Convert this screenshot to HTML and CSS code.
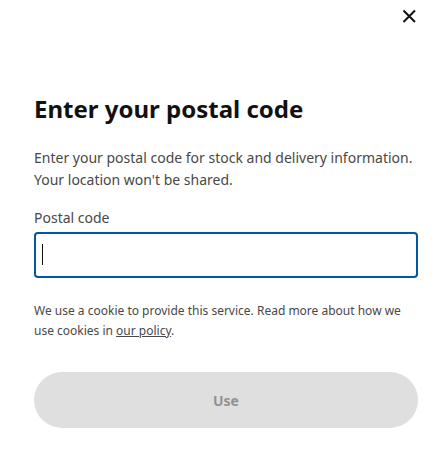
FILE: index.html
```html
<!DOCTYPE html>
<html lang="en">
<head>
<meta charset="utf-8">
<link rel="stylesheet" href="styles.css">
</head>
<body>
<div class="sheet">
  <div class="topbar">
    <button class="close" aria-label="Close">
      <svg width="24" height="24" viewBox="0 0 24 24"><path d="M6.5 6.5l11.5 11.5M18 6.5l-11.5 11.5" stroke="#111" stroke-width="2" fill="none"/></svg>
    </button>
  </div>
  <div class="content">
    <h1 class="title">Enter your postal code</h1>
    <p class="desc">Enter your postal code for stock and delivery information. Your location won't be shared.</p>
    <label class="label" for="pc">Postal code</label>
    <div class="field"><span class="caret"></span></div>
    <p class="note">We use a cookie to provide this service. Read more about how we use cookies in <a href="#" class="link">our policy</a>.</p>
    <button class="use">Use</button>
  </div>
</div>
</body>
</html>
```
FILE: styles.css
```css
* { box-sizing: border-box; }
html, body { margin: 0; padding: 0; background: #fff; }
body { font-family: "Noto Sans", "Open Sans", sans-serif; color: #111; }
.sheet { width: 445px; height: 461px; }
.topbar { display: flex; justify-content: flex-end; padding: 4px 24px 0 0; height: 60px; }
.close { width: 24px; height: 24px; border: 0; padding: 0; background: none; display: flex; }
.content { padding: 0 27px 0 34px; }
.title { margin: 35px 0 0; font-size: 24px; line-height: 28px; font-weight: 700; color: #111; }
.desc { margin: 24px 0 0; font-size: 14px; line-height: 22px; color: #484848; }
.label { display: block; margin-top: 16px; font-size: 14px; line-height: 22px; color: #484848; }
.field { margin-top: 3px; height: 46px; border: 2px solid #0058a3; border-radius: 4px; padding: 10px 0 0 6px; }
.caret { display: block; width: 1px; height: 21px; background: #111; }
.note { margin: 23px 0 0; font-size: 12px; line-height: 20px; color: #484848; }
.link { color: #484848; text-decoration: underline; }
.use { display: block; width: 100%; margin-top: 31px; height: 56px; border: 0; border-radius: 28px; background: #dfdfdf; color: #929292; font-family: inherit; font-size: 14px; font-weight: 700; }
```
